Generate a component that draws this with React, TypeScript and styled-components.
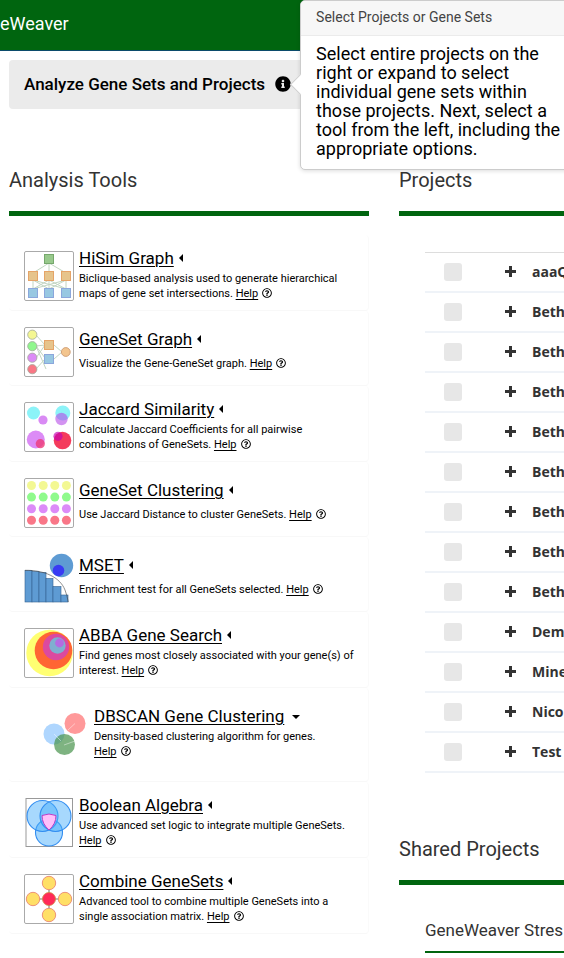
import React from 'react';
import styled, { createGlobalStyle } from 'styled-components';
import { FaInfoCircle, FaRegQuestionCircle } from 'react-icons/fa';

const GREEN = '#00650f';

const GlobalStyle = createGlobalStyle`
  *, *::before, *::after { box-sizing: border-box; }
  body {
    margin: 0;
    background: #fff;
    color: #333;
    font-family: Roboto, 'Liberation Sans', sans-serif;
  }
  h1, h2, h3, p { margin: 0; font-weight: 400; }
`;

const Page = styled.div`
  overflow: hidden;
`;

const TopBar = styled.header`
  display: flex;
  align-items: center;
  height: 51px;
  padding-bottom: 3px;
  background: ${GREEN};
  border-bottom: 1px solid #0b4b6b;
`;

const Brand = styled.a`
  color: #fff;
  font-size: 18px;
  line-height: 20px;
  text-decoration: none;
`;

const Banner = styled.div`
  display: flex;
  align-items: center;
  gap: 10px;
  height: 49px;
  margin: 9px 0 0 9px;
  padding: 0 15px 2px;
  border-radius: 4px 0 0 4px;
  background: #ebebeb;
  color: #000;
`;

const BannerTitle = styled.h1`
  font-size: 17px;
  font-weight: 500;
  line-height: 20px;
`;

const InfoAnchor = styled.div`
  position: relative;
  display: flex;
`;

const InfoButton = styled.button`
  display: flex;
  padding: 0;
  border: 0;
  background: none;
  color: #000;
  font-size: 16px;
`;

const Popover = styled.div`
  position: absolute;
  top: -76px;
  left: 25px;
  z-index: 10;
  width: 277px;
  border: 1px solid #ccc;
  border-radius: 5px;
  background: #fff;
  box-shadow: 0 1px 4px rgba(0, 0, 0, 0.14);

  &::before {
    content: '';
    position: absolute;
    top: 76px;
    left: -8px;
    width: 15px;
    height: 15px;
    border-left: 1px solid #ccc;
    border-bottom: 1px solid #ccc;
    background: #fff;
    transform: rotate(45deg);
  }
`;

const PopoverTitle = styled.h3`
  padding: 7px 15px 9px;
  border-bottom: 1px solid #ebebeb;
  border-radius: 4px 4px 0 0;
  background: #f7f7f7;
  color: #444;
  font-size: 14px;
  line-height: 18px;
`;

const PopoverText = styled.p`
  position: relative;
  padding: 8px 14px 11px 15px;
  color: #000;
  font-size: 18px;
  line-height: 19px;
`;

const Columns = styled.main`
  display: grid;
  grid-template-columns: minmax(0, 360px) minmax(165px, 1fr);
  gap: 30px;
  margin: 60px 0 0 9px;
`;

const SectionTitle = styled.h2`
  padding-bottom: 20px;
  border-bottom: 5px solid ${GREEN};
  font-size: 20px;
  line-height: 22px;
`;

const ToolList = styled.div`
  padding: 19px 0 24px;
`;

const Card = styled.article<{ $variant: Variant }>`
  display: flex;
  gap: 5px;
  min-height: ${(p) => (p.$variant === 'open' ? 94 : p.$variant === 'short' ? 75 : 76)}px;
  padding: ${(p) => (p.$variant === 'open' ? '18px 30px 0' : '16px 10px 0 15px')};
  border-bottom: 1px solid #f8f8f8;
  border-right: 1px solid #fafafa;
  border-radius: 4px;
`;

const Thumb = styled.svg`
  flex: none;
  width: 50px;
  height: 50px;
`;

const CardBody = styled.div<{ $variant: Variant }>`
  display: flex;
  flex-direction: column;
  gap: ${(p) => (p.$variant === 'short' ? 7 : 3)}px;
  margin-top: ${(p) => (p.$variant === 'short' ? 2 : p.$variant === 'open' ? 0 : -3)}px;
`;

const CardTitle = styled.h3`
  display: flex;
  align-items: center;
  font-size: 17px;
  line-height: 20px;
`;

const ToolLink = styled.a`
  color: #000;
  text-decoration: underline;
  text-decoration-thickness: 1px;
  text-underline-offset: 2px;
`;

const Toggle = styled.button`
  display: flex;
  padding: 0;
  margin-left: 4px;
  border: 0;
  background: none;
`;

const Description = styled.p`
  color: #000;
  font-size: 11px;
  line-height: 15px;

  svg {
    margin-left: 4px;
    vertical-align: -1px;
    font-size: 10px;
  }
`;

const ProjectTable = styled.table`
  width: calc(100% - 26px);
  margin: 36px 0 0 26px;
  border-collapse: separate;
  border-spacing: 0;
  border-top: 1px solid #ddd;
  table-layout: fixed;
`;

const Cell = styled.td<{ $width?: number }>`
  width: ${(p) => (p.$width ? `${p.$width}px` : 'auto')};
  height: 40px;
  padding: 0 0 1px;
  border-bottom: 2px solid #eff3f8;
  overflow: hidden;
  white-space: nowrap;
  font: 700 14px/20px 'Open Sans', sans-serif;
`;

const Check = styled.input`
  display: block;
  appearance: none;
  width: 18px;
  height: 18px;
  margin: 0 0 0 19px;
  border-radius: 3px;
  background: #e7e7e7;
`;

const Expand = styled.button`
  display: flex;
  padding: 0 0 0 1px;
  border: 0;
  background: none;
`;

const Shared = styled.section`
  margin-top: 65px;
`;

const GroupTitle = styled.h3`
  margin: 34px 0 0 26px;
  padding-bottom: 10px;
  border-bottom: 2px solid ${GREEN};
  overflow: hidden;
  white-space: nowrap;
  font-size: 17px;
  line-height: 22px;
`;

type Variant = 'short' | 'tall' | 'open';

const Frame = () => <rect x="0.5" y="0.5" width="49" height="49" rx="1.5" fill="#fff" stroke="#aaa" />;

const HiSimIcon = () => (
  <>
    <Frame />
    <path d="M25 12 9 22M25 12V22M25 12 42 22M9 29V38M9 29 25 38M9 29 42 38M25 29 9 38M25 29V38M25 29 42 38M42 29 9 38M42 29 25 38M42 29V38" stroke="#c2d6c2" fill="none" />
    <rect x="20.5" y="3.5" width="9" height="9" fill="#98c98c" stroke="#76a86c" />
    {[4.5, 20.5, 37.5].map((x) => (
      <React.Fragment key={x}>
        <rect x={x} y="20.5" width="9" height="9" fill="#e6c48c" stroke="#e5a468" />
        <rect x={x} y="37.5" width="9" height="9" fill="#98c8e2" stroke="#8ba7dc" />
      </React.Fragment>
    ))}
  </>
);

const GeneSetIcon = () => (
  <>
    <Frame />
    <path d="M12 8 21 18M12 19 21 18M12 19 21 31M12 31 21 18M12 19 22 42M12 42 21 32M30 18 38 25M30 32 38 25" stroke="#c2d6c2" fill="none" />
    {['#f4f792', '#8ff78d', '#dc8bf6', '#f97785'].map((c, i) => (
      <circle key={c} cx="8.3" cy={7.7 + i * 11.5} r="4.6" fill={c} stroke="#a3aa9c" strokeWidth="0.8" />
    ))}
    <rect x="20.5" y="13.5" width="9" height="9" fill="#e6c48c" stroke="#e5a468" />
    <rect x="20.5" y="27.5" width="9" height="9" fill="#98c8e2" stroke="#8ba7dc" />
    <circle cx="41.8" cy="25" r="4.4" fill="#f3c58e" stroke="#d2a279" />
  </>
);

const JaccardIcon = () => (
  <>
    <Frame />
    <circle cx="9.5" cy="11" r="6.5" fill="#8cf3f8" />
    <circle cx="38.8" cy="11" r="7.5" fill="#8cf3f8" />
    <circle cx="37.5" cy="17" r="6.2" fill="#b64be8" fillOpacity="0.6" />
    <circle cx="19" cy="18" r="4.6" fill="#d98af4" />
    <circle cx="11.8" cy="37.5" r="9" fill="#dc8bf6" />
    <circle cx="16.3" cy="41.7" r="4.6" fill="#ed3b78" fillOpacity="0.8" />
    <circle cx="38.5" cy="38.5" r="8.8" fill="#f43b5c" />
    <circle cx="34" cy="34.3" r="4.6" fill="#c400b4" fillOpacity="0.65" />
  </>
);

const ClusterIcon = () => (
  <>
    <Frame />
    {['#f3f893', '#8ffa8c', '#dc8bf8', '#f97788'].map((c, r) =>
      [7.5, 19.2, 30.8, 42.4].map((x) => <circle key={c + x} cx={x} cy={7.5 + r * 11.6} r="4.5" fill={c} />),
    )}
  </>
);

const MsetIcon = () => (
  <>
    <circle cx="37.5" cy="12.5" r="11.7" fill="#5e9bd3" />
    <circle cx="34.5" cy="17.5" r="5.8" fill="#393bf3" />
    {[
      [1, 17.5, 7], [8, 18.5, 7], [15, 19.5, 7], [22, 25.5, 7], [29, 33.5, 8], [37, 42, 7],
    ].map(([x, y, w]) => (
      <rect key={x} x={x} y={y} width={w} height={49 - y} fill="#5e9bd3" stroke="#34628f" strokeWidth="0.6" />
    ))}
    <path d="M1 17.3C20 17 36 24 41 37Q43 42 44.3 49" fill="none" stroke="#444" strokeWidth="0.6" />
  </>
);

const AbbaIcon = () => (
  <>
    <Frame />
    <circle cx="25.5" cy="25" r="23.2" fill="#ffff72" />
    <circle cx="29.5" cy="22.5" r="18.8" fill="#ff6533" />
    <circle cx="32" cy="19" r="13.2" fill="#dc499f" />
    <circle cx="33.5" cy="17.5" r="8.2" fill="#7faed0" />
    <circle cx="35.5" cy="15" r="4.4" fill="#b46be2" />
  </>
);

const DbscanIcon = () => (
  <>
    <circle cx="36" cy="17.5" r="10.5" fill="#ff999a" />
    <circle cx="15" cy="28" r="10.5" fill="#afd6fe" />
    <circle cx="25.5" cy="38.5" r="10.5" fill="#47934c" fillOpacity="0.7" />
    <path d="M15 28 22 35M29 24 36 17.5M25 39 36 35" stroke="#fff" strokeOpacity="0.55" strokeWidth="0.8" />
  </>
);

const BooleanIcon = () => (
  <>
    <rect x="2" y="0.5" width="46.5" height="48" fill="#fff" stroke="#999" />
    <g fill="#48adfa" fillOpacity="0.48" stroke="#328df0" strokeWidth="1.1">
      <circle cx="25" cy="34.5" r="13.5" />
      <circle cx="18.5" cy="18" r="15.5" />
      <circle cx="31.5" cy="18" r="15.5" />
    </g>
    <path d="M18 17.5Q25 14.5 32 17.5Q32 26 25 32Q18 26 18 17.5Z" fill="#ffbffa" stroke="#b93dc8" />
  </>
);

const CombineIcon = () => (
  <>
    <Frame />
    <path d="M9 25H41M25 9V41" stroke="#a4a99b" strokeWidth="1.6" />
    <g fill="#ffdf66" stroke="#ed9277">
      <circle cx="25" cy="9" r="6.7" />
      <circle cx="9" cy="25" r="6.7" />
      <circle cx="41" cy="25" r="6.7" />
      <circle cx="25" cy="41" r="6.7" />
    </g>
    <circle cx="25" cy="25" r="6.5" fill="#ff2a58" stroke="#d1863f" strokeWidth="0.8" />
  </>
);

const PlusIcon = () => (
  <svg width="11" height="11" viewBox="0 0 11 11" aria-hidden="true">
    <path d="M5.5 0V11M0 5.5H11" stroke="#333" strokeWidth="3" />
  </svg>
);

const tools: { name: string; text: string; variant: Variant; Icon: () => React.ReactElement }[] = [
  { name: 'HiSim Graph', text: 'Biclique-based analysis used to generate hierarchical maps of gene set intersections.', variant: 'tall', Icon: HiSimIcon },
  { name: 'GeneSet Graph', text: 'Visualize the Gene-GeneSet graph.', variant: 'short', Icon: GeneSetIcon },
  { name: 'Jaccard Similarity', text: 'Calculate Jaccard Coefficients for all pairwise combinations of GeneSets.', variant: 'tall', Icon: JaccardIcon },
  { name: 'GeneSet Clustering', text: 'Use Jaccard Distance to cluster GeneSets.', variant: 'short', Icon: ClusterIcon },
  { name: 'MSET', text: 'Enrichment test for all GeneSets selected.', variant: 'short', Icon: MsetIcon },
  { name: 'ABBA Gene Search', text: 'Find genes most closely associated with your gene(s) of interest.', variant: 'tall', Icon: AbbaIcon },
  { name: 'DBSCAN Gene Clustering', text: 'Density-based clustering algorithm for genes.', variant: 'open', Icon: DbscanIcon },
  { name: 'Boolean Algebra', text: 'Use advanced set logic to integrate multiple GeneSets.', variant: 'tall', Icon: BooleanIcon },
  { name: 'Combine GeneSets', text: 'Advanced tool to combine multiple GeneSets into a single association matrix.', variant: 'tall', Icon: CombineIcon },
];

const projects = ['aaaQ', 'Beth', 'Beth', 'Beth', 'Beth', 'Beth', 'Beth', 'Beth', 'Beth', 'Dem', 'Mine', 'Nico', 'Test'];

const ToolCard = ({ name, text, variant, Icon }: (typeof tools)[number]) => (
  <Card $variant={variant}>
    <Thumb viewBox="0 0 50 50" aria-hidden="true"><Icon /></Thumb>
    <CardBody $variant={variant}>
      <CardTitle>
        <ToolLink href="#">{name}</ToolLink>
        <Toggle type="button" aria-label={`${name} options`} aria-expanded={variant === 'open'}>
          {variant === 'open' ? (
            <svg width="16" height="10" viewBox="0 0 16 10"><path d="M4 4H12L8 8Z" /></svg>
          ) : (
            <svg width="6" height="10" viewBox="0 0 6 10"><path d="M5 1V9L1 5Z" /></svg>
          )}
        </Toggle>
      </CardTitle>
      <Description>
        {text} <ToolLink href="#">Help</ToolLink>
        <FaRegQuestionCircle aria-hidden="true" />
      </Description>
    </CardBody>
  </Card>
);

export default function App() {
  return (
    <Page>
      <GlobalStyle />
      <TopBar>
        <Brand href="#">eWeaver</Brand>
      </TopBar>
      <Banner>
        <BannerTitle>Analyze Gene Sets and Projects</BannerTitle>
        <InfoAnchor>
          <InfoButton type="button" aria-label="About this page"><FaInfoCircle /></InfoButton>
          <Popover role="tooltip">
            <PopoverTitle>Select Projects or Gene Sets</PopoverTitle>
            <PopoverText>
              Select entire projects on the right or expand to select individual gene sets within those
              projects. Next, select a tool from the left, including the appropriate options.
            </PopoverText>
          </Popover>
        </InfoAnchor>
      </Banner>
      <Columns>
        <section>
          <SectionTitle>Analysis Tools</SectionTitle>
          <ToolList>
            {tools.map((tool) => <ToolCard key={tool.name} {...tool} />)}
          </ToolList>
        </section>
        <div>
          <section>
            <SectionTitle>Projects</SectionTitle>
            <ProjectTable>
              <tbody>
                {projects.map((name, i) => (
                  <tr key={i}>
                    <Cell $width={79}><Check type="checkbox" aria-label={`Select ${name}`} /></Cell>
                    <Cell $width={28}>
                      <Expand type="button" aria-label={`Expand ${name}`}><PlusIcon /></Expand>
                    </Cell>
                    <Cell>{name}</Cell>
                  </tr>
                ))}
              </tbody>
            </ProjectTable>
          </section>
          <Shared>
            <SectionTitle>Shared Projects</SectionTitle>
            <GroupTitle>GeneWeaver Stres</GroupTitle>
          </Shared>
        </div>
      </Columns>
    </Page>
  );
}
